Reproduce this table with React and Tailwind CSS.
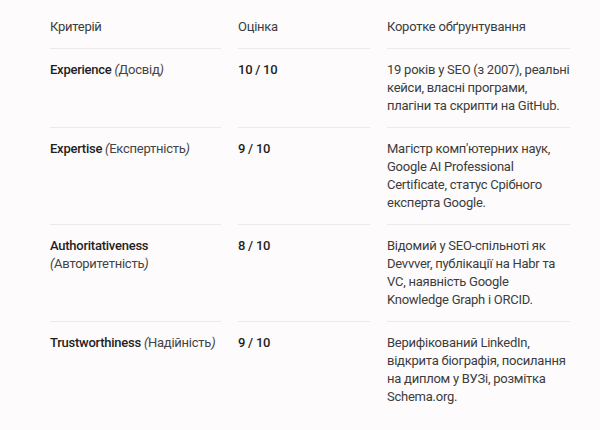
export default function App() {
  const rows = [
    {
      en: "Experience",
      ua: "Досвід",
      score: "10 / 10",
      text: "19 років у SEO (з 2007), реальні кейси, власні програми, плагіни та скрипти на GitHub.",
      wrap: false,
    },
    {
      en: "Expertise",
      ua: "Експертність",
      score: "9 / 10",
      text: "Магістр комп'ютерних наук, Google AI Professional Certificate, статус Срібного експерта Google.",
      wrap: false,
    },
    {
      en: "Authoritativeness",
      ua: "Авторитетність",
      score: "8 / 10",
      text: "Відомий у SEO-спільноті як Devvver, публікації на Habr та VC, наявність Google Knowledge Graph і ORCID.",
      wrap: true,
    },
    {
      en: "Trustworthiness",
      ua: "Надійність",
      score: "9 / 10",
      text: "Верифікований LinkedIn, відкрита біографія, посилання на диплом у ВУЗі, розмітка Schema.org.",
      wrap: false,
    },
  ];
  const line = "border-b border-[#ecebec]";
  return (
    <div
      className="min-h-[430px] w-[600px] bg-[#fdfbfc] pt-[18px] pl-[50px]"
      style={{ fontFamily: "Roboto, 'Noto Sans', sans-serif" }}
    >
      <div className="grid grid-cols-[171px_132px_183px] gap-x-[17px] text-[13px] leading-[18px] tracking-[-0.25px] text-[#3c3c3c]">
        <div className={`pb-[12px] ${line}`}>Критерій</div>
        <div className={`pb-[12px] ${line}`}>Оцінка</div>
        <div className={`pb-[12px] ${line}`}>Коротке обґрунтування</div>
        {rows.map((r, i) => (
          <div key={i} className="contents">
            <div className={`pt-[12px] pb-[12px] ${i < 3 ? line : ""}`}>
              <span className="font-medium text-[#1f1f1f]">{r.en}</span>
              {r.wrap ? <br /> : " "}
              <span className="text-[#444]">
                <i>(</i>
                {r.ua}
                <i>)</i>
              </span>
            </div>
            <div className={`pt-[12px] pb-[12px] font-medium text-[#1f1f1f] ${i < 3 ? line : ""}`}>
              {r.score}
            </div>
            <div className={`pt-[12px] pb-[12px] ${i < 3 ? line : ""}`}>{r.text}</div>
          </div>
        ))}
      </div>
    </div>
  );
}
